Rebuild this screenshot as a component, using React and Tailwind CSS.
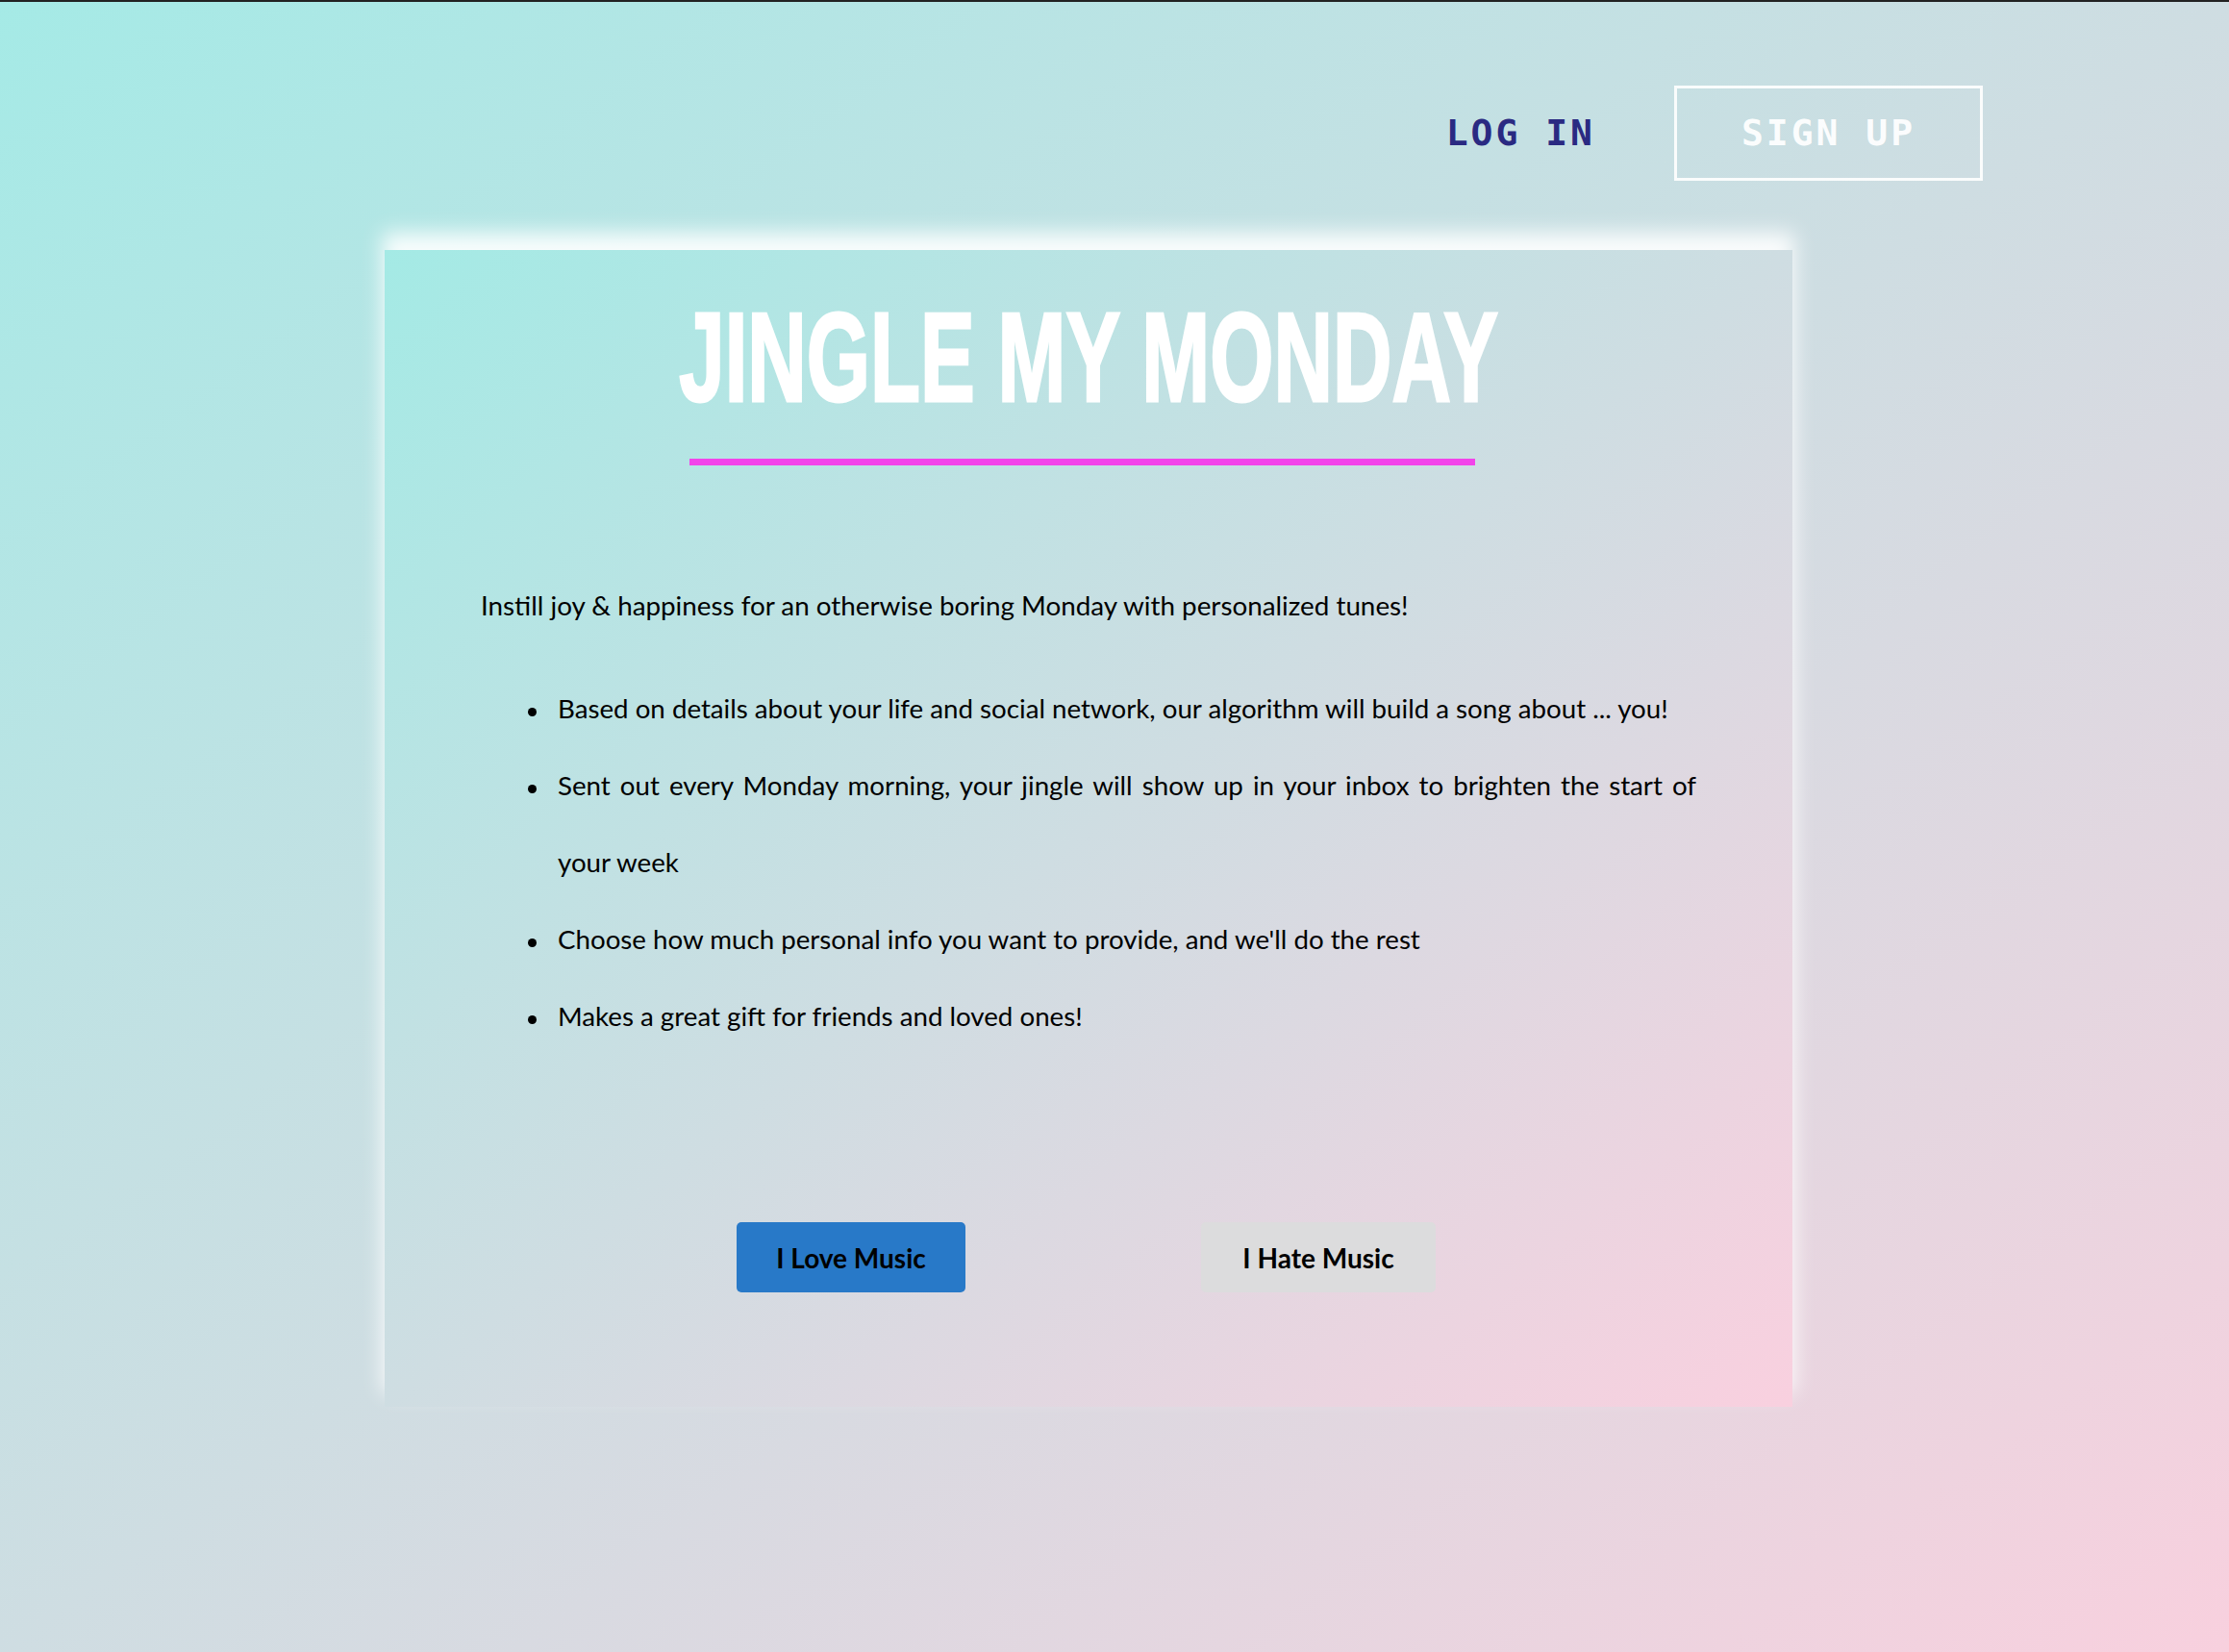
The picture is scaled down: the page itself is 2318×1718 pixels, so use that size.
import React from 'react';

const features = [
  'Based on details about your life and social network, our algorithm will build a song about ... you!',
  'Sent out every Monday morning, your jingle will show up in your inbox to brighten the start of your week',
  "Choose how much personal info you want to provide, and we'll do the rest",
  'Makes a great gift for friends and loved ones!',
];

export default function App() {
  return (
    <div className="min-h-screen border-t-2 border-[#222222] bg-[linear-gradient(to_bottom_right,#a5eae6,#f8d0de)] font-['Lato',sans-serif] text-black">
      {/* Header */}
      <header className="flex items-center justify-end pr-[256px] pt-[87px] font-['DejaVu_Sans_Mono',monospace] text-[38px] font-bold tracking-[3px]">
        <a className="mr-[82px] text-[#2a2a82]">LOG IN</a>
        <a className="flex h-[99px] w-[321px] items-center justify-center border-[3px] border-white/90 text-white/95">SIGN UP</a>
      </header>

      {/* Card */}
      <main className="ml-[400px] mt-[72px] w-[1464px] bg-[linear-gradient(to_bottom_right,#a4eae5,#f9d0df)] px-[100px] pb-[119px] pt-[46px] shadow-[0_-16px_20px_2px_rgba(255,255,255,0.9)]">
        <h1 className="flex justify-center whitespace-nowrap font-['Liberation_Sans',sans-serif] text-[132px] font-bold leading-none text-white">
          <span className="inline-block scale-x-[0.645] [-webkit-text-stroke:3px_white]">JINGLE MY MONDAY</span>
        </h1>
        <div className="ml-[217px] mt-[39px] h-[7px] w-[817px] bg-[#f244ea]" />

        <p className="mt-[106px] text-justify text-[27.8px] leading-[80px]">
          Instill joy &amp; happiness for an otherwise boring Monday with personalized tunes!
        </p>
        <ul className="mt-[27px] pl-[49px] text-[27.7px] leading-[80px]">
          {features.map((f) => (
            <li key={f} className="flex items-start">
              <span className="mr-[22px] mt-[39px] h-[9px] w-[9px] shrink-0 rounded-full bg-black" />
              <span className="text-justify">{f}</span>
            </li>
          ))}
        </ul>

        <div className="ml-[266px] mt-[174px] flex gap-[245px]">
          <button className="flex h-[73px] w-[238px] items-center justify-center rounded-[5px] bg-[#2879c8] text-[28px] font-bold">
            I Love Music
          </button>
          <button className="flex h-[73px] w-[244px] items-center justify-center rounded-[5px] bg-[#dcdcdd] text-[28px] font-bold">
            I Hate Music
          </button>
        </div>
      </main>
    </div>
  );
}
